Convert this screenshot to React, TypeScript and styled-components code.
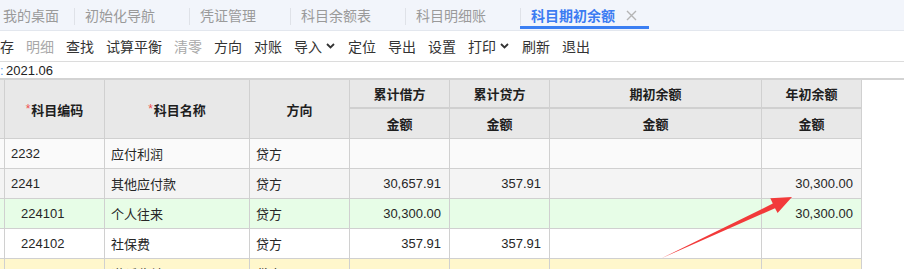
import React from "react";
import styled, { createGlobalStyle } from "styled-components";

const GlobalStyle = createGlobalStyle`
  html, body {
    margin: 0;
    padding: 0;
    background: #fff;
    overflow: hidden;
  }
  body {
    font-family: "Liberation Sans", "Noto Sans CJK SC", sans-serif;
    color: #333;
  }
`;

const Page = styled.div`
  position: relative;
  width: 904px;
  height: 269px;
  overflow: hidden;
`;

const TabBar = styled.div`
  display: flex;
  align-items: stretch;
  height: 30px;
  background: #f2f5fb;
  border-bottom: 1px solid #e3e7ee;
  font-size: 14px;
`;

const Tab = styled.div<{ $active?: boolean; $home?: boolean }>`
  position: relative;
  display: flex;
  align-items: center;
  padding-left: ${(p) => (p.$home ? "3px" : "11px")};
  padding-right: ${(p) => (p.$home ? "15px" : "0")};
  color: ${(p) => (p.$active ? "#3c7cf2" : "#9a9a9a")};
  font-weight: ${(p) => (p.$active ? 700 : 400)};
  white-space: nowrap;

  &::before {
    content: "";
    display: ${(p) => (p.$home ? "none" : "block")};
    position: absolute;
    left: 0;
    top: 8px;
    height: 17px;
    width: 1px;
    background: #dfe2e8;
  }

  &::after {
    content: "";
    display: ${(p) => (p.$active ? "block" : "none")};
    position: absolute;
    left: 0;
    right: 0;
    bottom: 1px;
    height: 3px;
    background: #3b7ff3;
  }
`;

const TabClose = styled.span<{ $show?: boolean }>`
  display: flex;
  align-items: center;
  justify-content: flex-start;
  width: 34px;
  padding-left: 11px;
  box-sizing: border-box;
  visibility: ${(p) => (p.$show ? "visible" : "hidden")};
`;

const Toolbar = styled.div`
  display: flex;
  align-items: center;
  gap: 12px;
  height: 30px;
  border-bottom: 1px solid #dcdcdc;
  font-size: 14px;
`;

const ToolItem = styled.span<{ $disabled?: boolean }>`
  display: flex;
  align-items: center;
  color: ${(p) => (p.$disabled ? "#a8a8a8" : "#333")};
  white-space: nowrap;
`;

const Caret = styled.span`
  display: flex;
  align-items: center;
  width: 14px;
  padding-left: 4px;
  box-sizing: border-box;
`;

const DateRow = styled.div`
  display: flex;
  align-items: center;
  height: 16px;
  font-size: 13px;
  color: #222;
`;

const DateLabel = styled.span`
  color: #5a9be8;
  width: 6px;
`;

const GridWrap = styled.div`
  border-top: 2px solid #d3d3d3;
`;

const Table = styled.table`
  border-collapse: separate;
  border-spacing: 0;
  table-layout: fixed;
  width: 862px;
  font-size: 13px;
`;

const HeadRow = styled.tr<{ $h: number }>`
  height: ${(p) => p.$h}px;
`;

const Th = styled.th<{ $thick?: boolean }>`
  background: #e8e8e8;
  border-right: 1px solid #d0d0d0;
  border-bottom: ${(p) => (p.$thick ? "2px" : "1px")} solid #d0d0d0;
  font-weight: 700;
  color: #1e1e1e;
  text-align: center;
  padding: 0;
  white-space: nowrap;
`;

const Star = styled.span`
  color: #f05050;
  font-weight: 400;
  font-size: 12px;
  vertical-align: 2px;
  margin-right: 1px;
`;

const BodyRow = styled.tr<{ $bg: string }>`
  height: 30px;
  background: ${(p) => p.$bg};
`;

const Td = styled.td<{ $num?: boolean; $indent?: number }>`
  border-right: 1px solid #d0d0d0;
  border-bottom: 1px solid #d0d0d0;
  padding: 0 ${(p) => (p.$num ? "8px" : "4px")} 0
    ${(p) => (p.$num ? "4px" : `${6 + (p.$indent || 0)}px`)};
  text-align: ${(p) => (p.$num ? "right" : "left")};
  color: #262626;
  white-space: nowrap;
  overflow: hidden;
`;

const Annotation = styled.svg`
  position: absolute;
  left: 0;
  top: 0;
  pointer-events: none;
`;

const tabs = ["我的桌面", "初始化导航", "凭证管理", "科目余额表", "科目明细账"];

const tools: { label: string; disabled?: boolean; menu?: boolean }[] = [
  { label: "存" },
  { label: "明细", disabled: true },
  { label: "查找" },
  { label: "试算平衡" },
  { label: "清零", disabled: true },
  { label: "方向" },
  { label: "对账" },
  { label: "导入", menu: true },
  { label: "定位" },
  { label: "导出" },
  { label: "设置" },
  { label: "打印", menu: true },
  { label: "刷新" },
  { label: "退出" },
];

type Row = {
  code: string;
  name: string;
  dir: string;
  debit: string;
  credit: string;
  opening: string;
  year: string;
  child?: boolean;
  bg: string;
};

const rows: Row[] = [
  { code: "2232", name: "应付利润", dir: "贷方", debit: "", credit: "", opening: "", year: "", bg: "#fafafa" },
  { code: "2241", name: "其他应付款", dir: "贷方", debit: "30,657.91", credit: "357.91", opening: "", year: "30,300.00", bg: "#f4f4f4" },
  { code: "224101", name: "个人往来", dir: "贷方", debit: "30,300.00", credit: "", opening: "", year: "30,300.00", child: true, bg: "#e7fde7" },
  { code: "224102", name: "社保费", dir: "贷方", debit: "357.91", credit: "357.91", opening: "", year: "", child: true, bg: "#ffffff" },
  { code: "2401", name: "递延收益", dir: "贷方", debit: "", credit: "", opening: "", year: "", bg: "#fff7cc" },
];

const Chevron = () => (
  <svg width="9" height="6" viewBox="0 0 9 6">
    <polyline points="1,1 4.5,4.5 8,1" fill="none" stroke="#333" strokeWidth="1.8" />
  </svg>
);

const CloseIcon = () => (
  <svg width="11" height="11" viewBox="0 0 11 11">
    <path d="M1 1 L10 10 M10 1 L1 10" stroke="#b4b4b4" strokeWidth="1.4" />
  </svg>
);

export default function App() {
  return (
    <Page>
      <GlobalStyle />
      <TabBar>
        {tabs.map((t, i) => (
          <Tab key={t} $home={i === 0}>
            {t}
            {i > 0 && <TabClose />}
          </Tab>
        ))}
        <Tab $active>
          科目期初余额
          <TabClose $show>
            <CloseIcon />
          </TabClose>
        </Tab>
      </TabBar>

      <Toolbar>
        {tools.map((t) => (
          <ToolItem key={t.label} $disabled={t.disabled}>
            {t.label}
            {t.menu && (
              <Caret>
                <Chevron />
              </Caret>
            )}
          </ToolItem>
        ))}
      </Toolbar>

      <DateRow>
        <DateLabel>:</DateLabel>
        2021.06
      </DateRow>

      <GridWrap>
        <Table>
          <colgroup>
            <col style={{ width: 5 }} />
            <col style={{ width: 100 }} />
            <col style={{ width: 145 }} />
            <col style={{ width: 100 }} />
            <col style={{ width: 100 }} />
            <col style={{ width: 100 }} />
            <col style={{ width: 212 }} />
            <col style={{ width: 100 }} />
          </colgroup>
          <thead>
            <HeadRow $h={29}>
              <Th rowSpan={2} />
              <Th rowSpan={2}>
                <Star>*</Star>科目编码
              </Th>
              <Th rowSpan={2}>
                <Star>*</Star>科目名称
              </Th>
              <Th rowSpan={2}>方向</Th>
              <Th $thick>累计借方</Th>
              <Th $thick>累计贷方</Th>
              <Th $thick>期初余额</Th>
              <Th $thick>年初余额</Th>
            </HeadRow>
            <HeadRow $h={30}>
              <Th>金额</Th>
              <Th>金额</Th>
              <Th>金额</Th>
              <Th>金额</Th>
            </HeadRow>
          </thead>
          <tbody>
            {rows.map((r) => (
              <BodyRow key={r.code} $bg={r.bg}>
                <Td />
                <Td $indent={r.child ? 10 : 0}>{r.code}</Td>
                <Td>{r.name}</Td>
                <Td>{r.dir}</Td>
                <Td $num>{r.debit}</Td>
                <Td $num>{r.credit}</Td>
                <Td $num>{r.opening}</Td>
                <Td $num>{r.year}</Td>
              </BodyRow>
            ))}
          </tbody>
        </Table>
      </GridWrap>

      <Annotation width="904" height="269" viewBox="0 0 904 269">
        <polygon
          points="661,258.5 772.8,203.6 770.3,198.3 792,197 777.6,212.9 775,208.2"
          fill="#f23a3a"
        />
      </Annotation>
    </Page>
  );
}
